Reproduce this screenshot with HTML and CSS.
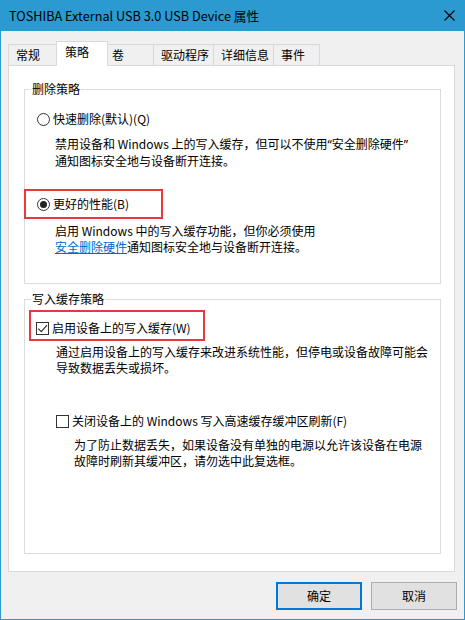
FILE: index.html
```html
<!DOCTYPE html>
<html lang="zh-CN">
<head>
<meta charset="utf-8">
<title>属性</title>
<link rel="stylesheet" href="styles.css">
</head>
<body>
<div class="window">
  <div class="titlebar">
    <span class="title">TOSHIBA External USB 3.0 USB Device 属性</span>
    <svg class="close" width="11" height="11" viewBox="0 0 11 11"><path d="M0.5 0.5 L10.5 10.5 M10.5 0.5 L0.5 10.5" stroke="#000" stroke-width="1.1" fill="none"/></svg>
  </div>
  <div class="tabs">
    <div class="tab t1">常规</div>
    <div class="tab t2 active">策略</div>
    <div class="tab t3">卷</div>
    <div class="tab t4">驱动程序</div>
    <div class="tab t5">详细信息</div>
    <div class="tab t6">事件</div>
  </div>
  <div class="panel">
    <div class="group g1">
      <div class="legend">删除策略</div>
      <div class="opt radio-row r1"><span class="radio"></span><span>快速删除(默认)(Q)</span></div>
      <div class="desc d1">禁用设备和 Windows 上的写入缓存，但可以不使用<span class="q">“</span>安全删除硬件<span class="q">”</span><br>通知图标安全地与设备断开连接。</div>
      <div class="annot a1"><div class="opt"><span class="radio checked"></span><span>更好的性能(B)</span></div></div>
      <div class="desc d2">启用 Windows 中的写入缓存功能，但你必须使用<br><a class="link" href="#">安全删除硬件</a>通知图标安全地与设备断开连接。</div>
    </div>
    <div class="group g2">
      <div class="legend">写入缓存策略</div>
      <div class="annot a2"><div class="opt"><span class="check"><svg width="13" height="13" viewBox="0 0 13 13"><path d="M2.3 6.6 L5.3 9.6 L11 3.2" stroke="#333" stroke-width="1.2" fill="none"/></svg></span><span>启用设备上的写入缓存(W)</span></div></div>
      <div class="desc d3">通过启用设备上的写入缓存来改进系统性能，但停电或设备故障可能会<br>导致数据丢失或损坏。</div>
      <div class="opt cb2"><span class="check"></span><span>关闭设备上的 Windows 写入高速缓存缓冲区刷新(F)</span></div>
      <div class="desc d4">为了防止数据丢失，如果设备没有单独的电源以允许该设备在电源<br>故障时刷新其缓冲区，请勿选中此复选框。</div>
    </div>
  </div>
  <div class="buttons">
    <div class="btn default">确定</div>
    <div class="btn">取消</div>
  </div>
</div>
</body>
</html>
```

FILE: styles.css
```css
html, body {
  margin: 0;
  padding: 0;
}
body {
  font-family: "Noto Sans CJK SC", "Microsoft YaHei", sans-serif;
  font-size: 12px;
  line-height: 16px;
  color: #000;
  background: #fff;
}
.window {
  width: 465px;
  height: 620px;
  box-sizing: border-box;
  border: 1px solid #2b9ad0;
  border-top: none;
  background: #f0f0f0;
  display: flex;
  flex-direction: column;
}
.titlebar {
  height: 31px;
  margin: 0 -1px;
  background: #2b9ad0;
  display: flex;
  align-items: center;
  justify-content: space-between;
  padding: 0 10px 0 9px;
  flex-shrink: 0;
}
.title {
  font-size: 12.7px;
  line-height: 16px;
  color: #000;
  padding-top: 1px;
}
.close {
  display: block;
  margin-top: -1px;
}
.tabs {
  display: flex;
  align-items: flex-end;
  height: 24px;
  margin: 10px 0 0 7px;
  flex-shrink: 0;
}
.tab {
  height: 21px;
  box-sizing: border-box;
  border: 1px solid #d9d9d9;
  border-bottom: none;
  background: #f0f0f0;
  padding: 2px 0 0 7px;
  margin-left: -1px;
  white-space: nowrap;
}
.tab.t1 { margin-left: 0; width: 49px; }
.tab.t2 { width: 52px; }
.tab.t3 { width: 47px; padding-left: 4px; }
.tab.t4 { width: 61px; }
.tab.t5 { width: 61px; }
.tab.t6 { width: 47px; }
.tab.active {
  height: 25px;
  background: #fff;
  margin-bottom: -1px;
  position: relative;
  z-index: 1;
  padding-left: 8px;
}
.panel {
  margin-left: 7px;
  width: 447px;
  height: 507px;
  box-sizing: border-box;
  border: 1px solid #d9d9d9;
  background: #fff;
  flex-shrink: 0;
}
.group {
  border: 1px solid #dcdcdc;
  margin-left: 15px;
  width: 417px;
  box-sizing: border-box;
}
.g1 {
  margin-top: 23px;
  padding: 0 0 28px 12px;
}
.g2 {
  margin-top: 15px;
  padding: 0 0 84px 11px;
}
.legend {
  width: fit-content;
  margin-top: -9px;
  margin-left: -6px;
  padding: 0 1px;
  background: #fff;
  height: 16px;
}
.g2 .legend {
  margin-left: -5px;
}
.opt {
  display: flex;
  align-items: center;
  height: 16px;
  gap: 3px;
  white-space: nowrap;
}
.r1 {
  margin-top: 14px;
}
.radio {
  width: 13px;
  height: 13px;
  box-sizing: border-box;
  border: 1px solid #333;
  border-radius: 50%;
  display: flex;
  align-items: center;
  justify-content: center;
  flex-shrink: 0;
}
.radio.checked::after {
  content: "";
  width: 7px;
  height: 7px;
  border-radius: 50%;
  background: #222;
}
.check {
  width: 13px;
  height: 13px;
  box-sizing: border-box;
  border: 1px solid #333;
  position: relative;
  flex-shrink: 0;
}
.check svg {
  position: absolute;
  left: -1px;
  top: -1px;
}
.desc {
  white-space: nowrap;
  color: #000;
}
.q {
  font-family: "Noto Sans", sans-serif;
}
.d1 {
  margin: 9px 0 0 18px;
}
.d2 {
  margin: 4px 0 0 18px;
}
.link {
  color: #0066cc;
  text-decoration: underline;
}
.annot {
  border: 2px solid #e8383d;
  box-sizing: border-box;
}
.a1 {
  margin: 20px 0 0 -13px;
  width: 139px;
  padding: 5px 0 5px 11px;
}
.a2 {
  margin: 3px 0 0 -7px;
  width: 176px;
  padding: 8px 0 3px 5px;
}
.d3 {
  margin: 3px 0 0 20px;
}
.cb2 {
  margin: 37px 0 0 20px;
}
.d4 {
  margin: 8px 0 0 38px;
}
.buttons {
  display: flex;
  justify-content: flex-end;
  gap: 9px;
  margin: 10px 7px 0 0;
}
.btn {
  width: 86px;
  height: 28px;
  box-sizing: border-box;
  border: 1px solid #adadad;
  background: #e1e1e1;
  display: flex;
  align-items: center;
  justify-content: center;
}
.btn.default {
  border: 2px solid #0078d7;
}
```
